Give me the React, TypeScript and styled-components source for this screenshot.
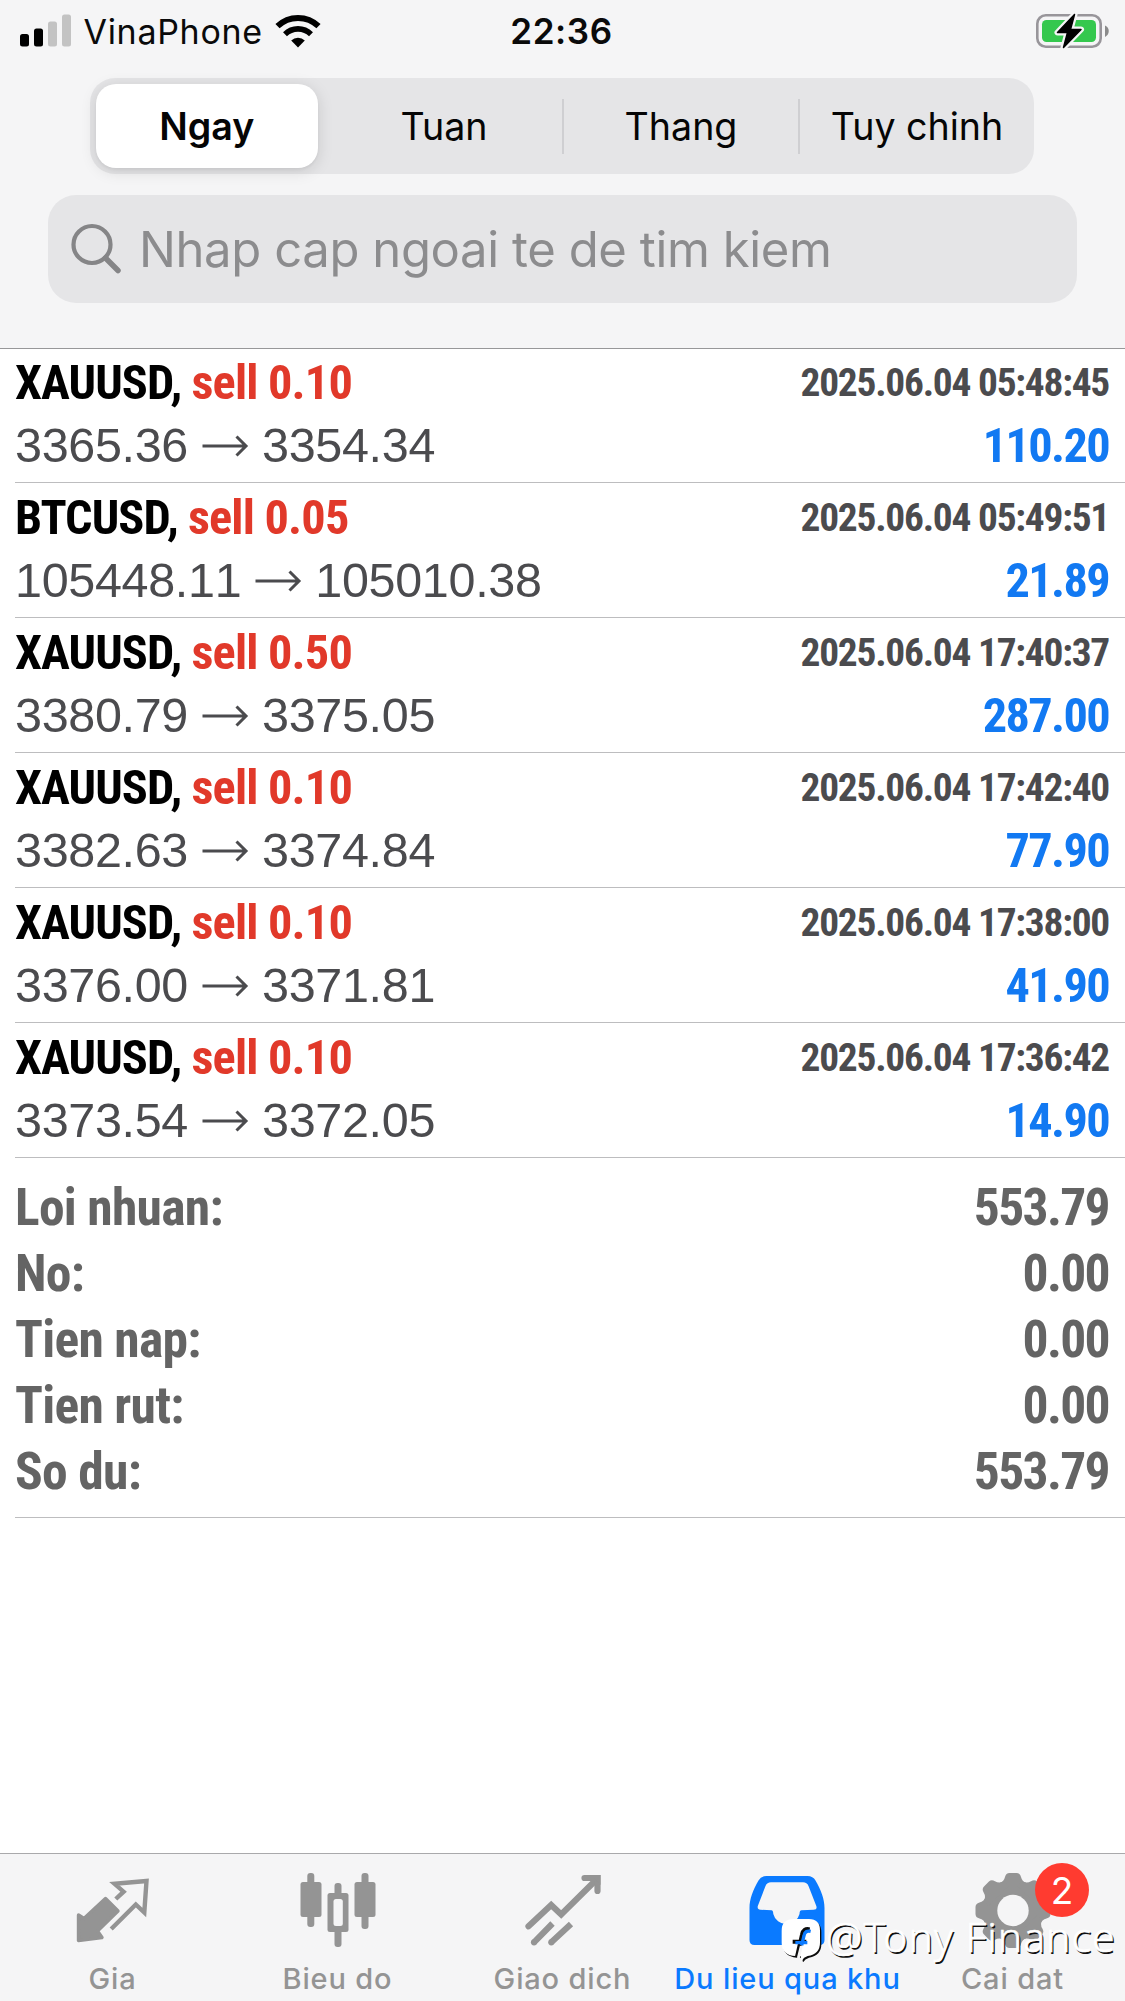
import React from 'react';
import styled, { createGlobalStyle } from 'styled-components';

const GlobalStyle = createGlobalStyle`
  *, *::before, *::after { box-sizing: border-box; }
  body { margin: 0; background: #fff; -webkit-font-smoothing: antialiased; }
`;

const ui = `Inter, "Liberation Sans", sans-serif`;
const condensed = `"Roboto Condensed", Roboto, "Liberation Sans", sans-serif`;

const Screen = styled.main`
  position: relative;
  display: flex;
  flex-direction: column;
  width: 1125px;
  height: 2001px;
  overflow: hidden;
  background: #fff;
  font-family: ${ui};
`;

const Header = styled.header`
  flex: none;
  height: 348px;
  background: #f5f5f6;
  box-shadow: 0 1px 0 #979799;
  z-index: 1;
`;

const StatusBar = styled.div`
  display: grid;
  grid-template-columns: 1fr auto 1fr;
  align-items: center;
  height: 62px;
  padding: 0 15px 0 20px;
`;

const Carrier = styled.div`
  display: flex;
  align-items: center;
  font-size: 34px;
  letter-spacing: 0.7px;
  color: #0a0a0a;
`;

const CarrierName = styled.span`
  margin: 0 12px 0 11.5px;
`;

const Clock = styled.time`
  margin-right: 7px;
  font-size: 35px;
  font-weight: 600;
  letter-spacing: 0.6px;
  color: #0a0a0a;
`;

const BatterySlot = styled.div`
  display: flex;
  justify-content: flex-end;
`;

const Segments = styled.nav`
  display: grid;
  grid-template-columns: repeat(4, 1fr);
  align-items: center;
  width: 944px;
  height: 96px;
  margin: 16px 0 0 90px;
  border-radius: 25px;
  background: #e5e5e7;
`;

const Segment = styled.button<{ $active?: boolean; $divided?: boolean }>`
  display: flex;
  align-items: center;
  justify-content: center;
  height: ${p => (p.$active ? 84 : 55)}px;
  margin: ${p => (p.$active ? '0 8px 0 5.5px' : '0')};
  padding: 0;
  border: 0;
  border-left: ${p => (p.$divided ? '2px solid #cfcfd2' : '0')};
  border-radius: ${p => (p.$active ? 20 : 0)}px;
  background: ${p => (p.$active ? '#fff' : 'transparent')};
  box-shadow: ${p => (p.$active ? '0 3px 16px rgba(0,0,0,.13), 0 2px 3px rgba(0,0,0,.04)' : 'none')};
  font-family: ${ui};
  font-size: 37.6px;
  font-weight: ${p => (p.$active ? 590 : 400)};
  white-space: nowrap;
  color: #050505;
`;

const SearchField = styled.div`
  display: flex;
  align-items: center;
  width: 1029px;
  height: 108px;
  margin: 21px 0 0 48px;
  padding-left: 23px;
  border-radius: 28px;
  background: #e5e5e7;
`;

const Placeholder = styled.span`
  margin-left: 17px;
  font-size: 49px;
  letter-spacing: -0.4px;
  white-space: nowrap;
  color: #8c8c8e;
`;

const Deals = styled.ul`
  margin: 0;
  padding: 0 0 0 15px;
  list-style: none;
`;

const DealRow = styled.li`
  display: grid;
  grid-template-columns: 1fr auto;
  grid-template-rows: 61px 65px;
  align-items: center;
  height: 135px;
  padding: 4px 16px 0 0;
  border-bottom: 1px solid #bdbdbf;
  white-space: nowrap;
`;

const Title = styled.span`
  font: 700 48.3px/61px ${condensed};
  letter-spacing: -0.95px;
  color: #000;
`;

const Side = styled.span`
  letter-spacing: -0.8px;
  color: #e1392a;
`;

const Stamp = styled.time`
  font: 700 39.4px/59px ${condensed};
  letter-spacing: -1.25px;
  text-align: right;
  color: #4b4b4e;
`;

const Prices = styled.span`
  display: flex;
  align-items: center;
  gap: 13.5px;
  font: 400 48.5px/65px "Liberation Sans", Arial, sans-serif;
  font-kerning: none;
  letter-spacing: -0.33px;
  color: #4b4b4e;
`;

const Profit = styled.span`
  font: 700 48.3px/65px ${condensed};
  letter-spacing: -1.65px;
  text-align: right;
  color: #1279f2;
`;

const Summary = styled.dl`
  height: 360px;
  margin: 0 0 0 15px;
  padding: 17px 16px 0 0;
  border-bottom: 1px solid #bdbdbf;
`;

const SummaryRow = styled.div`
  display: flex;
  justify-content: space-between;
  font: 700 51.5px/66px ${condensed};
  color: #646464;
`;

const SummaryLabel = styled.dt`
  letter-spacing: -0.7px;
`;

const SummaryValue = styled.dd`
  margin: 0;
  letter-spacing: -1.65px;
`;

const TabBar = styled.footer`
  display: grid;
  grid-template-columns: repeat(5, 225px);
  height: 148px;
  margin-top: auto;
  border-top: 1px solid #a9a9ab;
  background: #f5f5f6;
`;

const Tab = styled.div<{ $active?: boolean }>`
  position: relative;
  display: flex;
  flex-direction: column;
  align-items: center;
  padding-top: 10px;
  color: ${p => (p.$active ? '#0a7aff' : '#949494')};
`;

const TabLabel = styled.span`
  margin-top: 13px;
  font-size: 29px;
  font-weight: 500;
  line-height: 36px;
  letter-spacing: 0.85px;
  white-space: nowrap;
`;

const Badge = styled.span`
  position: absolute;
  left: 135px;
  top: 9px;
  display: flex;
  align-items: center;
  justify-content: center;
  width: 54px;
  height: 54px;
  border-radius: 50%;
  background: #ff3b30;
  font-size: 37px;
  line-height: 37px;
  color: #fff;
`;

const Watermark = styled.div`
  position: absolute;
  left: 765px;
  top: 1900px;
  display: flex;
  height: 80px;
`;

const WatermarkText = styled.span`
  font: 300 41px/73px "Noto Sans", "Open Sans", sans-serif;
  letter-spacing: 0.95px;
  white-space: nowrap;
  color: #fff;
  -webkit-text-stroke: 0.6px #fff;
  text-shadow: 1.5px 1.5px 0 #111;
`;

const SignalIcon = () => (
  <svg width="52" height="34" viewBox="0 0 52 34">
    <rect x="0" y="20" width="9" height="12.5" rx="2.5" />
    <rect x="14" y="14.5" width="9" height="18" rx="2.5" />
    <rect x="28" y="7.5" width="9" height="25" rx="2.5" fill="#c3c3c3" />
    <rect x="42" y="0.5" width="9" height="32" rx="2.5" fill="#c3c3c3" />
  </svg>
);

const WifiIcon = () => (
  <svg width="46" height="34" viewBox="0 0 46 34" fill="none" stroke="#000">
    <path d="M2.5 12.2a29.5 29.5 0 0 1 41 0" strokeWidth="6" />
    <path d="M10 20.2a18.6 18.6 0 0 1 26 0" strokeWidth="5.6" />
    <path d="M16.2 26.6a9.8 9.8 0 0 1 13.6 0L23 33.4z" fill="#000" stroke="none" />
  </svg>
);

const BatteryIcon = () => (
  <svg width="74" height="36" viewBox="0 0 74 36">
    <rect x="1.3" y="2.3" width="63.4" height="31.4" rx="8.5" fill="none" stroke="#98959a" strokeWidth="2.6" />
    <path d="M69 12.5c5 2 5 9 0 11.5z" fill="#8b8b8b" />
    <rect x="6" y="7" width="54" height="22" rx="4.5" fill="#35c84e" />
    <path
      d="M38.500 1.500 21.500 19.500h10L27.500 34.500 45 16.500H34.500z"
      stroke="#f5f5f6"
      strokeWidth="6"
      strokeLinejoin="round"
    />
    <path
      d="M38.500 1.500 21.500 19.500h10L27.500 34.500 45 16.500H34.500z"
      stroke="#000"
      strokeWidth="1.500"
      strokeLinejoin="round"
    />
  </svg>
);

const SearchIcon = () => (
  <svg width="51" height="52" viewBox="0 0 51 52" fill="none" stroke="#858587" strokeLinecap="round">
    <circle cx="21" cy="21.500" r="18.500" strokeWidth="4.200" />
    <path d="M34.500 35 47 47.500" strokeWidth="5.500" />
  </svg>
);

const ArrowIcon = () => (
  <svg width="47" height="24" viewBox="0 0 47 24" fill="none" stroke="#4b4b4e" strokeWidth="3">
    <path d="M0.500 12H44M34.500 2.500 44 12 34.500 21.500" />
  </svg>
);

const QuotesIcon = () => (
  <svg
    width="120"
    height="84"
    viewBox="0 0 120 84"
    stroke="currentColor"
    strokeLinejoin="round"
    strokeLinecap="round"
  >
    <path
      d="M52.500 34.500 65 47 44.500 67 49 73.500 25.500 76.500V51L31 54.500z"
      fill="currentColor"
      strokeWidth="3.400"
    />
    <path
      d="M62.800 35 70.600 27.700 61.500 19.800 93.500 17 91.300 48.500 82.800 40.500 58.200 65"
      fill="none"
      strokeWidth="4.400"
      strokeLinejoin="miter"
      strokeLinecap="butt"
    />
  </svg>
);

const CandlesIcon = () => (
  <svg width="120" height="84" viewBox="0 0 120 84" fill="currentColor">
    <rect x="29.300" y="9" width="7" height="54" rx="3" />
    <rect x="22.500" y="18" width="21" height="35" rx="2.500" />
    <rect x="56.500" y="19" width="7" height="64" rx="3" />
    <rect x="49.500" y="29" width="21" height="39" rx="2.500" />
    <rect x="55.500" y="35" width="9.300" height="27" rx="2.500" fill="#f5f5f6" />
    <rect x="83.500" y="9" width="7" height="56" rx="3" />
    <rect x="76.500" y="18" width="21" height="35" rx="2.500" />
  </svg>
);

const TradeIcon = () => (
  <svg width="120" height="84" viewBox="0 0 120 84" fill="none" stroke="currentColor" strokeWidth="6.200">
    <path d="M25.500 62.300 48.200 41 58.200 50.500 93 16" strokeLinecap="round" />
    <path d="M81.500 14H94.500V27" strokeLinecap="round" />
    <path d="M87 11H97.500V21z" fill="currentColor" stroke="none" />
    <path d="M31 78.300 49.500 59.500M48.300 78.300 68 60" />
    <circle cx="31" cy="78.300" r="3.100" fill="currentColor" stroke="none" />
    <circle cx="48.300" cy="78.300" r="3.100" fill="currentColor" stroke="none" />
  </svg>
);

const HistoryIcon = () => (
  <svg width="120" height="84" viewBox="0 0 120 84" fill="currentColor" fillRule="evenodd">
    <path d="M38.500 12H79.500Q85 12 87.500 16.500C93 26 96.500 35 96.500 44V76Q96.500 81 91.500 81H26.500Q21.500 81 21.500 76V44C21.500 35 25 26 30.500 16.500Q33 12 38.500 12ZM43 18.300Q39 18.300 37.500 22L29.800 42Q29 45.500 32.500 45.800L43.500 46.300Q45.200 46.500 45.300 50A13.500 13.500 0 0 0 71.500 50Q71.500 46.500 73.500 46.300L85.500 45.800Q89.500 45.500 88.300 42L80.500 22Q79 18.300 75 18.300Z" />
  </svg>
);

const GearIcon = () => (
  <svg width="120" height="84" viewBox="0 0 120 84" fill="currentColor">
    <circle cx="60" cy="46.500" r="30.500" />
    {[0, 45, 90, 135, 180, 225, 270, 315].map(a => (
      <path
        key={a}
        transform={`rotate(${a} 60 46.500)`}
        d="M46 19.500Q51 17.500 52 13Q53 9 56.500 9H63.500Q67 9 68 13Q69 17.500 74 19.500V26H46z"
      />
    ))}
    <circle cx="60" cy="46.500" r="15.700" fill="#f5f5f6" />
  </svg>
);

const bubble =
  'M86 57H132Q165 57 165 92V128Q165 162 128 168Q116 171 110 182L107 168H91Q50 165 50 128V92Q50 57 86 57Z';
const glyphStroke = 'M134 88Q115 84 111 104L96 170M83 125H124';

const BubbleLogo = () => (
  <svg width="61" height="80" viewBox="0 0 183 240" fill="none">
    <path d={bubble} fill="#0c0c0c" transform="translate(4 5)" />
    <path d={bubble} fill="#fff" />
    <path d={glyphStroke} stroke="#0c0c0c" strokeWidth="12" />
    <path d="M137 94Q120 90 117 107L110 136M91 128H127" stroke="#0a7aff" strokeWidth="10" />
    <path d="M109 138 100 174" stroke="#f5f5f6" strokeWidth="9" />
  </svg>
);

const deals = [
  ['XAUUSD', 'sell 0.10', '3365.36', '3354.34', '2025.06.04 05:48:45', '110.20'],
  ['BTCUSD', 'sell 0.05', '105448.11', '105010.38', '2025.06.04 05:49:51', '21.89'],
  ['XAUUSD', 'sell 0.50', '3380.79', '3375.05', '2025.06.04 17:40:37', '287.00'],
  ['XAUUSD', 'sell 0.10', '3382.63', '3374.84', '2025.06.04 17:42:40', '77.90'],
  ['XAUUSD', 'sell 0.10', '3376.00', '3371.81', '2025.06.04 17:38:00', '41.90'],
  ['XAUUSD', 'sell 0.10', '3373.54', '3372.05', '2025.06.04 17:36:42', '14.90'],
];

const totals = [
  ['Loi nhuan:', '553.79'],
  ['No:', '0.00'],
  ['Tien nap:', '0.00'],
  ['Tien rut:', '0.00'],
  ['So du:', '553.79'],
];

export default function App() {
  return (
    <>
      <GlobalStyle />
      <Screen>
        <Header>
          <StatusBar>
            <Carrier>
              <SignalIcon />
              <CarrierName>VinaPhone</CarrierName>
              <WifiIcon />
            </Carrier>
            <Clock>22:36</Clock>
            <BatterySlot>
              <BatteryIcon />
            </BatterySlot>
          </StatusBar>
          <Segments>
            <Segment $active>Ngay</Segment>
            <Segment>Tuan</Segment>
            <Segment $divided>Thang</Segment>
            <Segment $divided>Tuy chinh</Segment>
          </Segments>
          <SearchField>
            <SearchIcon />
            <Placeholder>Nhap cap ngoai te de tim kiem</Placeholder>
          </SearchField>
        </Header>

        <Deals>
          {deals.map(([symbol, side, open, close, time, profit]) => (
            <DealRow key={time}>
              <Title>
                {symbol}, <Side>{side}</Side>
              </Title>
              <Stamp>{time}</Stamp>
              <Prices>
                <span>{open}</span>
                <ArrowIcon />
                <span>{close}</span>
              </Prices>
              <Profit>{profit}</Profit>
            </DealRow>
          ))}
        </Deals>

        <Summary>
          {totals.map(([label, value]) => (
            <SummaryRow key={label}>
              <SummaryLabel>{label}</SummaryLabel>
              <SummaryValue>{value}</SummaryValue>
            </SummaryRow>
          ))}
        </Summary>

        <TabBar>
          <Tab>
            <QuotesIcon />
            <TabLabel>Gia</TabLabel>
          </Tab>
          <Tab>
            <CandlesIcon />
            <TabLabel>Bieu do</TabLabel>
          </Tab>
          <Tab>
            <TradeIcon />
            <TabLabel>Giao dich</TabLabel>
          </Tab>
          <Tab $active>
            <HistoryIcon />
            <TabLabel>Du lieu qua khu</TabLabel>
          </Tab>
          <Tab>
            <GearIcon />
            <Badge>2</Badge>
            <TabLabel>Cai dat</TabLabel>
          </Tab>
        </TabBar>

        <Watermark>
          <BubbleLogo />
          <WatermarkText>@Tony Finance</WatermarkText>
        </Watermark>
      </Screen>
    </>
  );
}
